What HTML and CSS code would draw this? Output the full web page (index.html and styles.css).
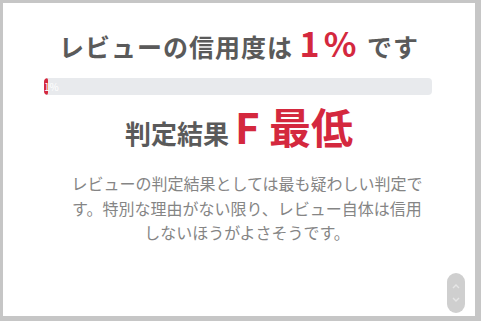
FILE: index.html
```html
<!DOCTYPE html>
<html lang="ja">
<head>
    <meta charset="UTF-8">
    <meta name="viewport" content="width=device-width, initial-scale=1.0">
    <title>レビュー判定</title>
    <link rel="stylesheet" href="styles.css">
</head>
<body>
    <div class="frame">
        <h1 class="score">レビューの信用度は <span class="red pct">1%</span> です</h1>
        <div class="bar">
            <div class="bar-fill" style="width: 1%;">1%</div>
        </div>
        <h2 class="grade">判定結果 <span class="red rank">F 最低</span></h2>
        <p class="note">レビューの判定結果としては最も疑わしい判定です。特別な理由がない限り、レビュー自体は信用しないほうがよさそうです。</p>

        <!-- スクロールボタン -->
        <div class="scroller">
            <svg width="10" height="8" viewBox="0 0 10 8"><path d="M2 6 L5 3 L8 6" fill="none" stroke="#e6e6e6" stroke-width="1.4"/></svg>
            <svg width="10" height="8" viewBox="0 0 10 8"><path d="M2 2 L5 5 L8 2" fill="none" stroke="#e6e6e6" stroke-width="1.4"/></svg>
        </div>
    </div>
</body>
</html>
```

FILE: styles.css
```css
html, body {
    margin: 0;
    padding: 0;
}
body {
    font-family: "Noto Sans CJK JP", "Noto Sans", sans-serif;
    background-color: #c6c6c6;
    width: 481px;
    height: 321px;
    overflow: hidden;
}
.frame {
    position: relative;
    margin: 3px 6px 5px 3px;
    height: 313px;
    background-color: white;
    text-align: center;
    color: #5a5a5a;
}
.score {
    margin: 0;
    padding-top: 20px;
    font-size: 25px;
    line-height: 40px;
    font-weight: bold;
    letter-spacing: 1px;
}
.red {
    color: #d4283e;
}
.pct {
    font-size: 34px;
    letter-spacing: 4px;
}
.bar {
    margin: 12px 0 0 41px;
    width: 388px;
    height: 17px;
    background-color: #e8eaed;
    border-radius: 4px;
    overflow: hidden;
    text-align: left;
}
.bar-fill {
    height: 100%;
    min-width: 4px;
    background-color: #d4283e;
    border-radius: 4px;
    color: white;
    font-size: 10px;
    line-height: 17px;
    white-space: nowrap;
}
.grade {
    margin: 0;
    padding-top: 7px;
    font-size: 26px;
    line-height: 48px;
    font-weight: bold;
}
.rank {
    font-size: 42px;
}
.note {
    margin: 14px auto 0;
    padding-left: 16px;
    width: 352px;
    font-size: 16px;
    line-height: 24.5px;
    color: #858585;
}
.scroller {
    position: absolute;
    left: 444px;
    top: 270px;
    width: 18px;
    height: 40px;
    border-radius: 9px;
    background-color: #cfcfcf;
    display: flex;
    flex-direction: column;
    align-items: center;
    justify-content: center;
    gap: 6px;
}
```
